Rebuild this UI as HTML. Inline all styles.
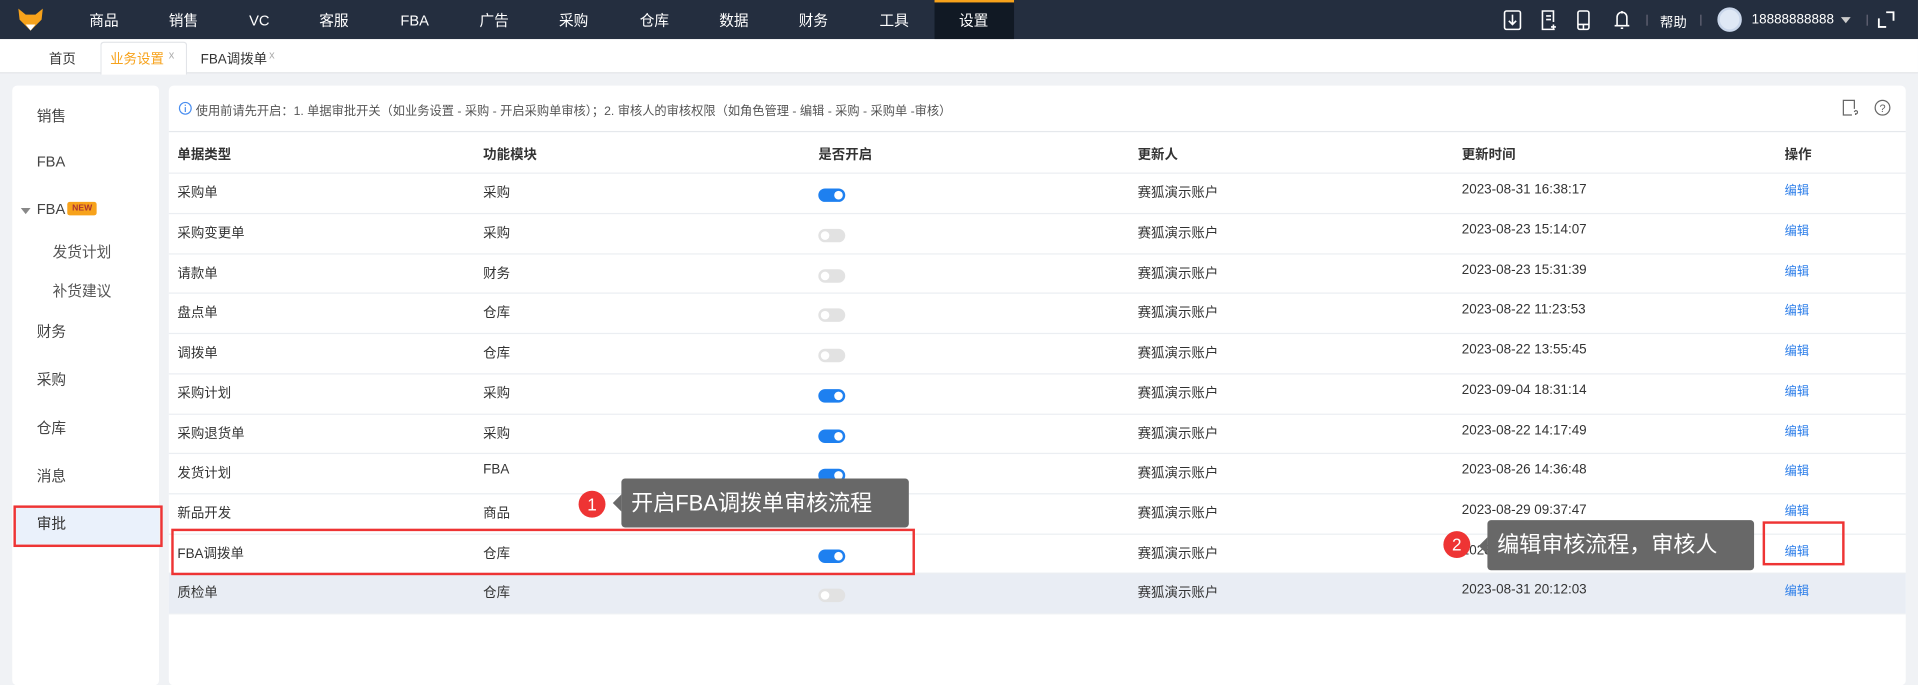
<!DOCTYPE html>
<html><head><meta charset="utf-8">
<style>
*{margin:0;padding:0;box-sizing:border-box}
html,body{width:1918px;height:678px;overflow:hidden;background:#f0f2f5}
#w{position:absolute;left:0;top:0;width:1568px;height:554px;transform:scale(1.2232,1.2238);transform-origin:0 0;font-family:"Liberation Sans","Noto Sans CJK SC",sans-serif;font-size:11px;color:#333;background:#f0f2f5}
.a{position:absolute;white-space:nowrap}
.nav{position:absolute;left:0;top:0;width:1568px;height:32px;background:#242e3f}
.ni{position:absolute;top:0;height:32px;line-height:34px;color:#fff;font-size:12px;transform:translateX(-50%)}
.tabs{position:absolute;left:0;top:32px;width:1568px;height:28px;background:#fff;border-bottom:1px solid #e2e4e8}
.card{position:absolute;background:#fff;border-radius:4px}
.si{position:absolute;left:30px;font-size:12px;color:#444}
.row{position:absolute;left:0;width:1420px;height:33px;border-top:1px solid #ebeef2}
.c{position:absolute;top:7px;font-size:11px;color:#333}
.tg{position:absolute;left:531px;top:12px;width:22px;height:11px;border-radius:6px;background:#1e80f0}
.tg::after{content:"";position:absolute;right:2px;top:2px;width:7px;height:7px;border-radius:50%;background:#fff}
.tg.off{background:#e2e2e2}
.tg.off::after{right:auto;left:2px}
.ed{position:absolute;left:1321px;top:5px;color:#2b7de9;font-size:10px}
.rb{position:absolute;border:2px solid #ee3434}
.tip{position:absolute;background:#686868;color:#fff;font-size:18px;border-radius:3px;line-height:40px;padding-left:8px}
.tip::before{content:"";position:absolute;left:-7px;top:50%;margin-top:-7px;border:7px solid transparent;border-left:0;border-right-color:#686868}
.num{position:absolute;width:22px;height:22px;border-radius:50%;background:#ee3434;color:#fff;font-size:14px;text-align:center;line-height:22px}
</style></head><body><div id="w">
<div class="nav">
 <svg class="a" style="left:14px;top:6px" width="22" height="20" viewBox="0 0 22 20"><path d="M1 1 L7 6 L15 6 L21 1 L20 10 L11 19 L2 10 Z" fill="#f7a21b"/><path d="M7 14 L11 19 L15 14 Z" fill="#fff"/></svg>
 <div class="ni" style="left:85px">商品</div><div class="ni" style="left:150px">销售</div><div class="ni" style="left:212px">VC</div><div class="ni" style="left:273px">客服</div><div class="ni" style="left:339px">FBA</div><div class="ni" style="left:404px">广告</div><div class="ni" style="left:469px">采购</div><div class="ni" style="left:535px">仓库</div><div class="ni" style="left:600px">数据</div><div class="ni" style="left:665px">财务</div><div class="ni" style="left:731px">工具</div>
 <div class="a" style="left:764px;top:0;width:65px;height:32px;background:#111924;border-top:2px solid #f7a21b"></div>
 <div class="ni" style="left:796px">设置</div>
 <svg class="a" style="left:1229px;top:8px" width="120" height="17" viewBox="0 0 120 17" fill="none" stroke="#fff" stroke-width="1.3"><rect x="1" y="1" width="13" height="15" rx="1.5"/><path d="M7.5 4v8M4.5 9l3 3 3-3"/><path d="M42 16H32V1h9v9M35 5h4M35 8h4M41 12v4M39 14h4"/><rect x="61" y="1" width="9" height="15" rx="1.5"/><path d="M61 12h9M65.5 12v4"/><path d="M93 13V6a4 4 0 0 1 8 0v7zM91 13h12M97 1v2M96 15h2"/></svg>
 <div class="a" style="left:1346px;top:12px;width:1px;height:9px;background:#667"></div>
 <div class="a" style="left:1357px;top:10px;color:#fff;font-size:11px">帮助</div>
 <div class="a" style="left:1390px;top:12px;width:1px;height:9px;background:#667"></div>
 <div class="a" style="left:1404px;top:6px;width:20px;height:20px;border-radius:50%;background:#dfe8f5;border:2px solid #c9d6ea"></div>
 <div class="a" style="left:1432px;top:10px;color:#fff;font-size:11px">18888888888</div>
 <div class="a" style="left:1505px;top:14px;border:4px solid transparent;border-top:5px solid #ccc"></div>
 <div class="a" style="left:1526px;top:12px;width:1px;height:9px;background:#667"></div>
 <svg class="a" style="left:1535px;top:9px" width="14" height="14" fill="none" stroke="#fff" stroke-width="1.5"><path d="M1 6v7h6M7 1h6v7"/></svg>
</div>
<div class="tabs">
 <div class="a" style="left:40px;top:8px;font-size:11px;color:#333">首页</div>
 <div class="a" style="left:82px;top:2px;width:71px;height:27px;background:#fff;border:1px solid #e2e4e8;border-bottom:0;border-radius:3px 3px 0 0"></div>
 <div class="a" style="left:90px;top:8px;font-size:11px;color:#f7a21b">业务设置</div>
 <div class="a" style="left:138px;top:8px;font-size:9px;color:#aaa">x</div>
 <div class="a" style="left:164px;top:8px;font-size:11px;color:#333">FBA调拨单</div>
 <div class="a" style="left:220px;top:8px;font-size:9px;color:#aaa">x</div>
</div>
<div class="card" style="left:10px;top:70px;width:120px;height:490px">
 <div class="si" style="left:20px;top:16px">销售</div>
 <div class="si" style="left:20px;top:55px">FBA</div>
 <div class="a" style="left:7px;top:100px;border:4px solid transparent;border-top:5px solid #888"></div>
 <div class="si" style="left:20px;top:94px">FBA</div>
 <div class="a" style="left:45px;top:95px;background:#f7a21b;color:#a33;font-size:7px;line-height:9px;padding:1px 4px;border-radius:2px;font-weight:bold">NEW</div>
 <div class="si" style="left:33px;top:127px;color:#555">发货计划</div>
 <div class="si" style="left:33px;top:159px;color:#555">补货建议</div>
 <div class="si" style="left:20px;top:192px">财务</div>
 <div class="si" style="left:20px;top:231px">采购</div>
 <div class="si" style="left:20px;top:271px">仓库</div>
 <div class="si" style="left:20px;top:310px">消息</div>
 <div class="a" style="left:2px;top:343px;width:118px;height:33px;background:#eaf1fb"></div>
 <div class="si" style="left:20px;top:349px;color:#333">审批</div>
</div>
<div class="card" style="left:138px;top:70px;width:1420px;height:490px">
 <svg class="a" style="left:8px;top:13px" width="11" height="11"><circle cx="5.5" cy="5.5" r="4.8" fill="none" stroke="#4a8ef0"/><path d="M5.5 4.5v4M5.5 2.5v1" stroke="#4a8ef0"/></svg>
 <div class="a" style="left:22px;top:12px;font-size:10px;color:#555">使用前请先开启：1. 单据审批开关（如业务设置 - 采购 - 开启采购单审核）；2. 审核人的审核权限（如角色管理 - 编辑 - 采购 - 采购单 -审核）</div>
 <svg class="a" style="left:1368px;top:11px" width="13" height="14" fill="none" stroke="#666"><path d="M8 13H1V1h9v7"/><path d="M10 10.5a1.3 1.3 0 1 1 1 1.5v1"/></svg>
 <svg class="a" style="left:1394px;top:11px" width="14" height="14"><circle cx="7" cy="7" r="6" fill="none" stroke="#666"/><text x="7" y="10.5" font-size="9" text-anchor="middle" fill="#666" font-family="Liberation Sans">?</text></svg>
 <div class="row" style="top:37px;border-top:1px solid #e5e8ec;height:34px"><div class="c" style="left:7px;top:10px;font-weight:bold">单据类型</div><div class="c" style="left:257px;top:10px;font-weight:bold">功能模块</div><div class="c" style="left:531px;top:10px;font-weight:bold">是否开启</div><div class="c" style="left:792px;top:10px;font-weight:bold">更新人</div><div class="c" style="left:1057px;top:10px;font-weight:bold">更新时间</div><div class="c" style="left:1321px;top:10px;font-weight:bold">操作</div></div>
 <div class="row" style="top:71px"><div class="c" style="left:7px">采购单</div><div class="c" style="left:257px">采购</div><div class="tg"></div><div class="c" style="left:792px">赛狐演示账户</div><div class="c" style="left:1057px">2023-08-31 16:38:17</div><div class="ed">编辑</div></div>
 <div class="row" style="top:104px"><div class="c" style="left:7px">采购变更单</div><div class="c" style="left:257px">采购</div><div class="tg off"></div><div class="c" style="left:792px">赛狐演示账户</div><div class="c" style="left:1057px">2023-08-23 15:14:07</div><div class="ed">编辑</div></div>
 <div class="row" style="top:137px"><div class="c" style="left:7px">请款单</div><div class="c" style="left:257px">财务</div><div class="tg off"></div><div class="c" style="left:792px">赛狐演示账户</div><div class="c" style="left:1057px">2023-08-23 15:31:39</div><div class="ed">编辑</div></div>
 <div class="row" style="top:169px"><div class="c" style="left:7px">盘点单</div><div class="c" style="left:257px">仓库</div><div class="tg off"></div><div class="c" style="left:792px">赛狐演示账户</div><div class="c" style="left:1057px">2023-08-22 11:23:53</div><div class="ed">编辑</div></div>
 <div class="row" style="top:202px"><div class="c" style="left:7px">调拨单</div><div class="c" style="left:257px">仓库</div><div class="tg off"></div><div class="c" style="left:792px">赛狐演示账户</div><div class="c" style="left:1057px">2023-08-22 13:55:45</div><div class="ed">编辑</div></div>
 <div class="row" style="top:235px"><div class="c" style="left:7px">采购计划</div><div class="c" style="left:257px">采购</div><div class="tg"></div><div class="c" style="left:792px">赛狐演示账户</div><div class="c" style="left:1057px">2023-09-04 18:31:14</div><div class="ed">编辑</div></div>
 <div class="row" style="top:268px"><div class="c" style="left:7px">采购退货单</div><div class="c" style="left:257px">采购</div><div class="tg"></div><div class="c" style="left:792px">赛狐演示账户</div><div class="c" style="left:1057px">2023-08-22 14:17:49</div><div class="ed">编辑</div></div>
 <div class="row" style="top:300px"><div class="c" style="left:7px">发货计划</div><div class="c" style="left:257px">FBA</div><div class="tg"></div><div class="c" style="left:792px">赛狐演示账户</div><div class="c" style="left:1057px">2023-08-26 14:36:48</div><div class="ed">编辑</div></div>
 <div class="row" style="top:333px"><div class="c" style="left:7px">新品开发</div><div class="c" style="left:257px">商品</div><div class="tg"></div><div class="c" style="left:792px">赛狐演示账户</div><div class="c" style="left:1057px">2023-08-29 09:37:47</div><div class="ed">编辑</div></div>
 <div class="row" style="top:366px"><div class="c" style="left:7px">FBA调拨单</div><div class="c" style="left:257px">仓库</div><div class="tg"></div><div class="c" style="left:792px">赛狐演示账户</div><div class="c" style="left:1057px">2023-08-31 16:00:00</div><div class="ed">编辑</div></div>
 <div class="row" style="top:398px;background:#e9edf4"><div class="c" style="left:7px">质检单</div><div class="c" style="left:257px">仓库</div><div class="tg off"></div><div class="c" style="left:792px">赛狐演示账户</div><div class="c" style="left:1057px">2023-08-31 20:12:03</div><div class="ed">编辑</div></div>
 <div class="row" style="top:431px;border-top:1px solid #ebeef2;height:1px"></div>
</div>
<div class="rb" style="left:11px;top:413px;width:122px;height:34px"></div>
<div class="rb" style="left:140px;top:432px;width:608px;height:38px"></div>
<div class="rb" style="left:1441px;top:426px;width:67px;height:36px"></div>
<div class="num" style="left:473px;top:401px">1</div>
<div class="tip" style="left:508px;top:391px;width:235px;height:40px">开启FBA调拨单审核流程</div>
<div class="num" style="left:1180px;top:434px">2</div>
<div class="tip" style="left:1216px;top:425px;width:218px;height:41px">编辑审核流程，审核人</div>
</div></body></html>
